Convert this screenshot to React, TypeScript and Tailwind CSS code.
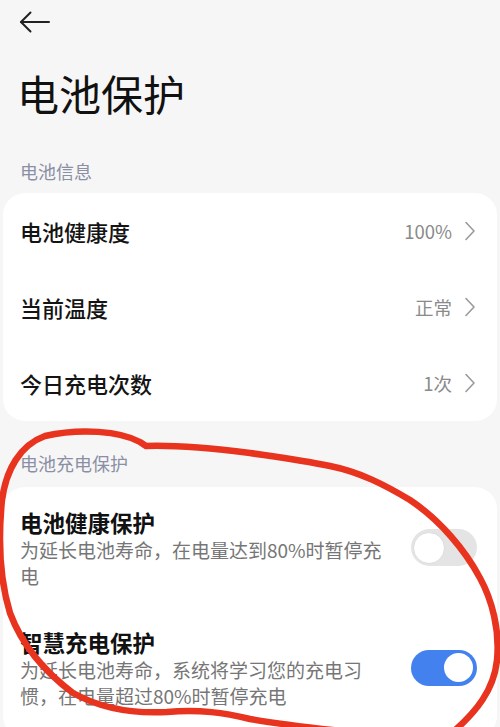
import React from "react";

function Chevron() {
  return (
    <svg width="12" height="20" viewBox="0 0 12 20" fill="none">
      <path d="M2 1.5 L10 10 L2 18.5" stroke="#9a9a9a" strokeWidth="1.6" strokeLinecap="round" strokeLinejoin="round" />
    </svg>
  );
}

function InfoRow({ label, value }: { label: string; value: string }) {
  return (
    <div className="flex h-[76px] items-center justify-between pl-[17px] pr-[21px]">
      <span className="text-[22px] font-medium leading-[30px] text-[#141414]">{label}</span>
      <div className="flex items-center gap-[12px]">
        <span className="text-[18.5px] leading-[24px] text-[#8a8a8a]">{value}</span>
        <Chevron />
      </div>
    </div>
  );
}

function Toggle({ on }: { on: boolean }) {
  return on ? (
    <div className="flex h-[36px] w-[66px] shrink-0 items-center justify-end rounded-full bg-[#4281ee] pr-[4px]">
      <div className="h-[29px] w-[29px] rounded-full bg-white" />
    </div>
  ) : (
    <div className="flex h-[37px] w-[66px] shrink-0 items-center rounded-full bg-[#e4e4e4] pl-[2px]">
      <div className="h-[32px] w-[32px] rounded-full border border-[#dcdcdc] bg-white" />
    </div>
  );
}

export default function App() {
  return (
    <div className="relative h-[727px] w-[500px] overflow-hidden bg-[#f6f6f6] font-['Noto_Sans_CJK_SC','Noto_Sans',sans-serif]">
      <div className="flex h-[44px] items-center pl-[19px]">
        <svg width="32" height="22" viewBox="0 0 32 22" fill="none">
          <path d="M2 11 H30" stroke="#222" strokeWidth="2" strokeLinecap="round" />
          <path d="M11.5 1.5 L2 11 L11.5 20.5" stroke="#222" strokeWidth="2" strokeLinecap="round" strokeLinejoin="round" />
        </svg>
      </div>
      <h1 className="mt-[24px] h-[50px] pl-[17px] text-[42px] font-normal leading-[50px] text-[#111]">电池保护</h1>

      <div className="mt-[41px] mb-[10px] pl-[20px] text-[18px] leading-[24px] text-[#8a8fa3]">电池信息</div>
      <div className="mx-[3px] rounded-[22px] bg-white">
        <InfoRow label="电池健康度" value="100%" />
        <InfoRow label="当前温度" value="正常" />
        <InfoRow label="今日充电次数" value="1次" />
      </div>

      <div className="mt-[30px] mb-[12px] pl-[20px] text-[18px] leading-[24px] text-[#8a8fa3]">电池充电保护</div>
      <div className="mx-[3px] rounded-[22px] bg-white pt-[20px] pb-[30px]">
        <div className="flex items-center justify-between pl-[17px] pr-[20px]">
          <div>
            <div className="text-[22.5px] font-bold leading-[30px] text-[#111]">电池健康保护</div>
            <div className="text-[19px] leading-[25.5px] text-[#767676]">
              为延长电池寿命，在电量达到80%时暂停充
              <br />电
            </div>
          </div>
          <Toggle on={false} />
        </div>
        <div className="mt-[39px] flex items-center justify-between pl-[17px] pr-[20px]">
          <div>
            <div className="text-[22.5px] font-bold leading-[30px] text-[#111]">智慧充电保护</div>
            <div className="text-[19px] leading-[25.5px] text-[#767676]">
              为延长电池寿命，系统将学习您的充电习
              <br />惯，在电量超过80%时暂停充电
            </div>
          </div>
          <Toggle on={true} />
        </div>
      </div>

      <svg className="pointer-events-none absolute left-0 top-0" width="500" height="727" viewBox="0 0 500 727" fill="none">
        <path
          d="M453 732 C476 712 494 690 497 660 C500 630 492 600 480 578 C465 550 440 520 410 500 C385 485 360 472 330 466 C300 460 270 456 250 453 C210 448 175 445 146 446 L140 442 C120 431 80 428 45 436 C20 445 6 470 2 500 C-2 540 0 580 10 613 C22 645 45 672 73 693 C100 708 130 714 167 712 C200 709 225 713 250 719 C290 726 330 730 380 735"
          stroke="#e8331f"
          strokeWidth="6.5"
          strokeLinecap="round"
          strokeLinejoin="round"
        />
      </svg>
    </div>
  );
}
